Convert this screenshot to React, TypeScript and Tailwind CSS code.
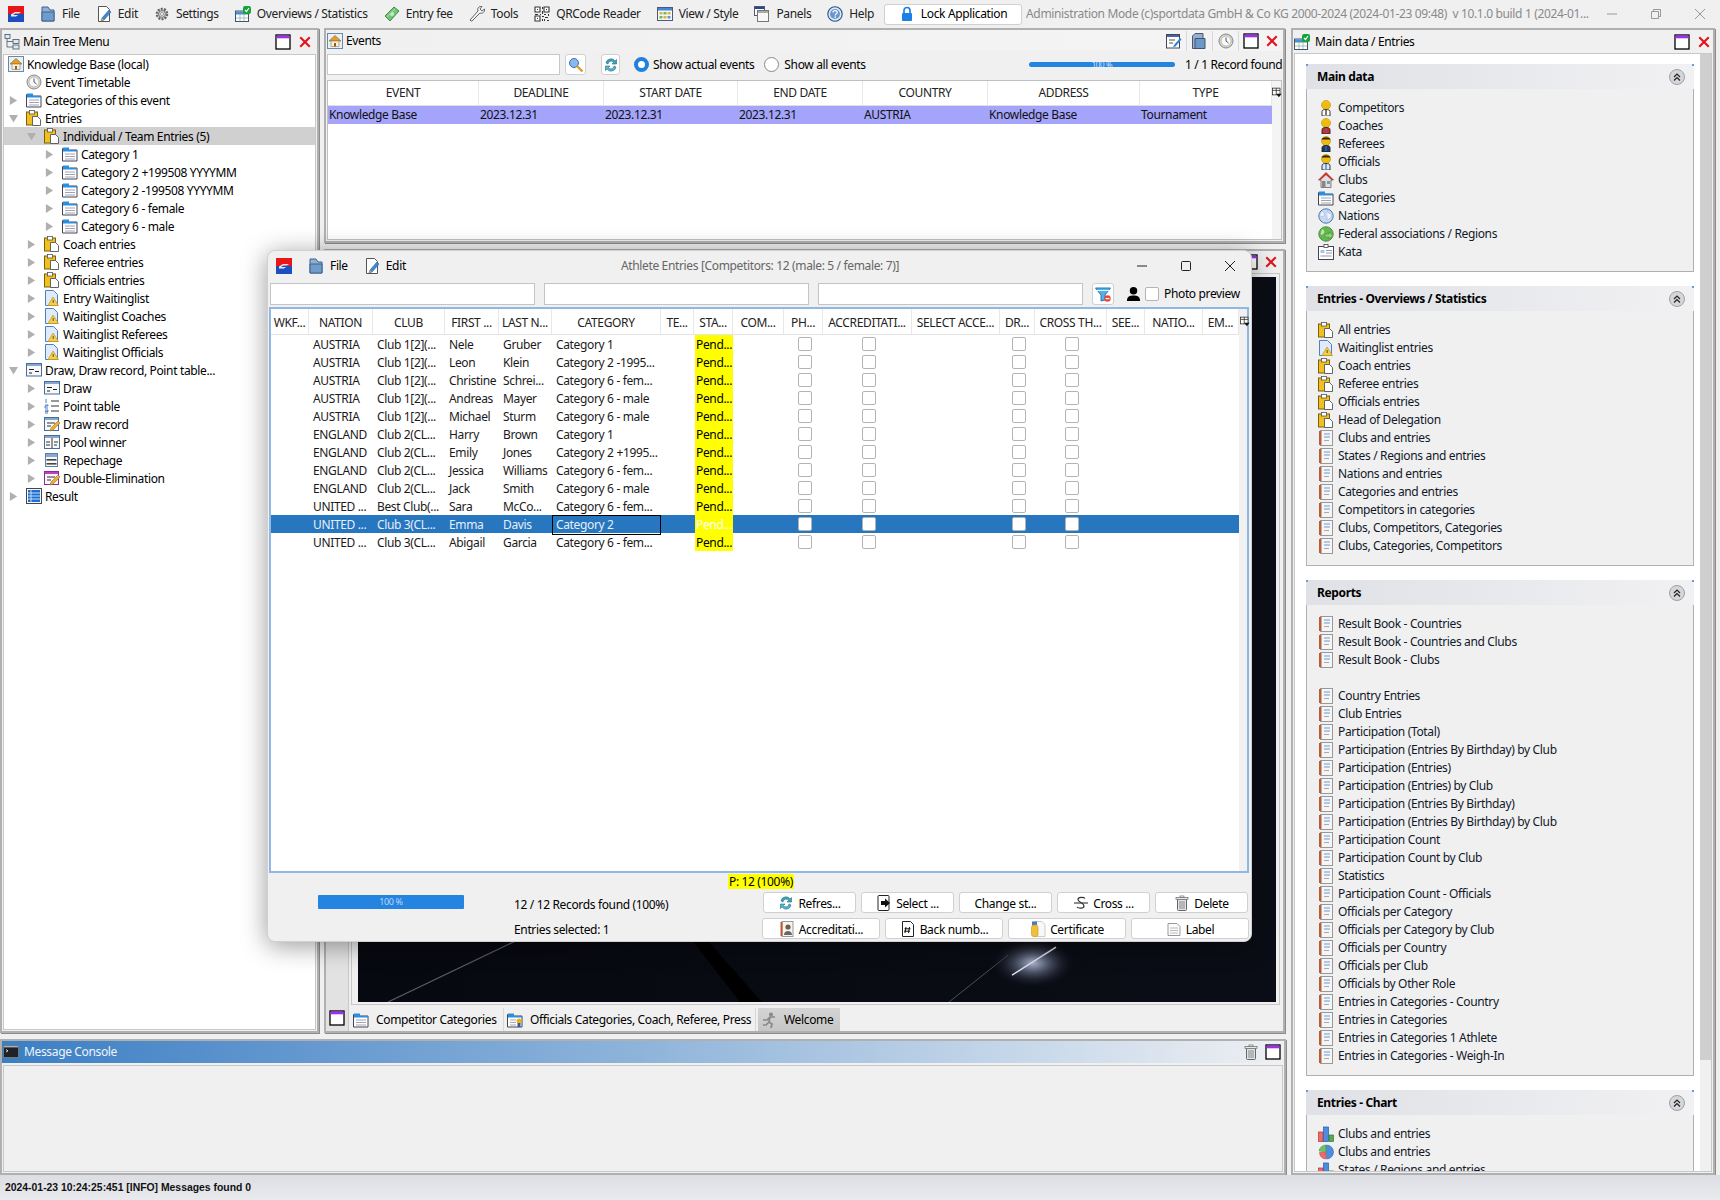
import React from "react";

type IP = { t: string; className?: string };

function Icon({ t, className = "w-4 h-4 shrink-0" }: IP) {
  const c = (n: React.ReactNode, vb = "0 0 16 16") => (
    <svg viewBox={vb} className={className} fill="none">{n}</svg>
  );
  switch (t) {
    case "logo":
      return c(<><rect x="0" y="0" width="16" height="8" fill="#e8151b" /><rect x="0" y="8" width="16" height="8" fill="#1b4fc0" /><path d="M3 8.5 L7 6 H13 L11 7.5 H7 L5 9 H10 L8 10.5 H3Z" fill="#e9e9f4" /></>);
    case "folder":
      return c(<><path d="M2 1h6l2 3h4v11H2Z" fill="#8fb0d6" stroke="#3f638c" /><path d="M2 6h12v9H2Z" fill="#6f9ccb" stroke="#3f638c" /></>);
    case "edit":
      return c(<><path d="M2.5 .5h8l3 3v12h-11Z" fill="#fff" stroke="#555" /><path d="M6 12l7-8 2 2-7 8-3 1Z" fill="#3a8ad8" stroke="#1f5c9c" strokeWidth=".6" /><path d="M5 15l1-3 2 2Z" fill="#e9a13a" /></>);
    case "gear":
      return c(<><circle cx="8" cy="8" r="5" fill="#e3e3e3" stroke="#666" strokeWidth="2.6" strokeDasharray="2 1.1" /><circle cx="8" cy="8" r="3.4" fill="#dcdcdc" stroke="#777" /><circle cx="8" cy="8" r="1.5" fill="#fff" stroke="#777" strokeWidth=".7" /></>);
    case "over":
      return c(<><rect x=".5" y="5" width="13" height="10.5" fill="#fff" stroke="#456" /><path d="M1 8.5h12M1 12h12M5 5v10M9 5v10" stroke="#8aa" strokeWidth=".7" /><rect x="1" y="5.4" width="12" height="2.6" fill="#4a90d8" /><rect x="8" y="0" width="8" height="8" rx="2" fill="#17a33b" /><path d="M10 4l1.5 1.6L14 2" stroke="#fff" strokeWidth="1.2" /></>);
    case "money":
      return c(<><path d="M1 10 L10 1 L15 5 L6 15Z" fill="#74c47a" stroke="#3d8d48" /><circle cx="8" cy="8" r="2" fill="#c5ecc4" /><path d="M3 11l8-8" stroke="#a5dba4" /></>);
    case "wrench":
      return c(<path d="M2 15 L1 14 L9 5 C8 2 10 0 13 .5 L11 3 L13 5 L15.5 3 C16 6 13.5 8 11 7 L3 15Z" fill="#f4f4f4" stroke="#666" />);
    case "qr":
      return c(<><path d="M1 1h5v5H1ZM10 1h5v5h-5ZM1 10h5v5H1Z" stroke="#333" strokeWidth="1.1" fill="#fff" /><path d="M3 3h1v1H3ZM12 3h1v1h-1ZM3 12h1v1H3ZM8 1h1v2H8ZM8 5h1v3H8ZM1 8h3v1H1ZM6 8h1v1H6ZM10 8h2v1h-2ZM14 8h1v2h-1ZM8 10h2v1H8ZM11 11h3v1h-3ZM8 13h1v2H8ZM10 13h1v2h-1ZM13 14h2v1h-2Z" fill="#333" /></>);
    case "view":
      return c(<><rect x=".5" y="1.5" width="15" height="13" fill="#f7f7f7" stroke="#557" /><rect x="1" y="2" width="14" height="2.5" fill="#3f8ad6" /><rect x="2.5" y="6" width="3" height="2.5" fill="#e6b23a" /><rect x="6.5" y="6" width="3" height="2.5" fill="#6cba5c" /><rect x="10.5" y="6" width="3" height="2.5" fill="#e6b23a" /><rect x="2.5" y="10" width="3" height="2.5" fill="#6cba5c" /><rect x="6.5" y="10" width="3" height="2.5" fill="#e6b23a" /><rect x="10.5" y="10" width="3" height="2.5" fill="#5a9be0" /></>);
    case "panels":
      return c(<><rect x=".5" y=".5" width="10" height="9" fill="#fff" stroke="#557" /><rect x="1" y="1" width="9" height="2" fill="#234a88" /><rect x="3.5" y="4.5" width="11" height="11" fill="#f8f8f8" stroke="#777" /><rect x="4" y="5" width="10" height="2" fill="#aaa" /></>);
    case "help":
      return c(<><circle cx="8" cy="8" r="7.2" fill="#dde9f7" stroke="#2d4f80" strokeWidth="1.1" /><circle cx="8" cy="8" r="5" fill="#6b97cf" /><path d="M6 6.4c0-2.5 4.2-2.5 4.2 0 0 1.6-2 1.5-2 3" stroke="#fff" strokeWidth="1.2" /><rect x="7.5" y="10.4" width="1.4" height="1.4" fill="#fff" /></>);
    case "lock":
      return c(<><path d="M5 7V4.5a3 3 0 0 1 6 0V7" stroke="#1b7fe6" strokeWidth="1.7" /><rect x="3" y="7" width="10" height="8" rx="1" fill="#1b7fe6" /></>);
    case "house":
      return c(<><rect x=".5" y=".5" width="15" height="15" fill="#e8f0f8" stroke="#6a88a8" /><path d="M8 2.5 L14 8 H2Z" fill="#e0a030" stroke="#a05a10" strokeWidth=".6" /><rect x="4" y="8" width="8" height="5.5" fill="#f6f0e0" stroke="#8a7a50" strokeWidth=".6" /><rect x="7" y="10" width="2" height="3.5" fill="#a05a10" /></>);
    case "treeic":
      return c(<><rect x="1" y="0.5" width="5" height="4" fill="#dfe8f3" stroke="#456" strokeWidth=".8" /><rect x="9" y="5.5" width="6" height="4" fill="#dfe8f3" stroke="#456" strokeWidth=".8" /><rect x="9" y="11" width="6" height="4" fill="#dfe8f3" stroke="#456" strokeWidth=".8" /><path d="M3 5v8h6M3 7.5h6" stroke="#456" strokeWidth=".8" /></>);
    case "clock":
      return c(<><circle cx="8" cy="8" r="7" fill="#e8d9ad" stroke="#7a8aa8" /><circle cx="8" cy="8" r="5" fill="#f7f9fc" stroke="#99a" strokeWidth=".6" /><path d="M8 4.5V8l2.5 2" stroke="#4a5a78" strokeWidth="1" /></>);
    case "cat":
      return c(<><path d="M.5 2.5h5l1 1.5h8.5v11H.5Z" fill="#fff" stroke="#445" /><rect x="1" y="1.5" width="6" height="2.6" fill="#2b8fe0" /><rect x="1" y="4" width="14" height="1.5" fill="#2b8fe0" /><path d="M3 8h10M3 10.5h10M3 13h10" stroke="#99a" strokeWidth=".9" /></>);
    case "catof":
      return c(<><path d="M.5 2.5h5l1 1.5h8.5v11H.5Z" fill="#fff" stroke="#445" /><rect x="1" y="1.5" width="6" height="2.6" fill="#2b8fe0" /><rect x="1" y="4" width="14" height="1.5" fill="#2b8fe0" /><path d="M3 8h6M3 10.5h6M3 13h6" stroke="#99a" strokeWidth=".9" /><circle cx="12" cy="9" r="2.5" fill="#e8b410" /><rect x="10.5" y="11" width="3" height="4" fill="#2b5ca8" /></>);
    case "clip":
      return c(<><rect x=".5" y="2" width="11" height="13" fill="#efc01e" stroke="#7a6010" /><rect x="3.5" y=".5" width="5" height="3.5" fill="#fff" stroke="#555" strokeWidth=".8" /><path d="M6.5 6.5h5l3 3v6h-8Z" fill="#fff" stroke="#555" strokeWidth=".9" /></>);
    case "warn":
      return c(<><path d="M1.5.5h8l4 4v11h-12Z" fill="#dfeafa" stroke="#4d80c0" /><path d="M9 7l5.5 8.5H4Z" fill="#f4cf4a" stroke="#c49418" strokeWidth=".7" /><path d="M9.2 10v3" stroke="#6a5010" strokeWidth="1" /></>);
    case "draw":
      return c(<><rect x=".5" y="1.5" width="15" height="12.5" fill="#f8f8f8" stroke="#456c9a" /><rect x="1" y="2" width="14" height="2" fill="#86a8d0" /><path d="M3 7.5h5M3 11h3M9 9.5h4" stroke="#222" strokeWidth="1.1" /></>);
    case "point":
      return c(<><path d="M7 3h8M7 8h8M7 13h8" stroke="#333" strokeWidth="1.1" /><path d="M2 1v4M1 7h3v1H1v2h3M1 12h3v1.5H1M1 15h3" stroke="#4d7fc4" strokeWidth="1" /></>);
    case "drawrec":
      return c(<><rect x=".5" y="1.5" width="14" height="13" fill="#f8f8f8" stroke="#456c9a" /><rect x="1" y="2" width="13" height="2" fill="#86a8d0" /><path d="M3 7h8M3 10h4" stroke="#333" /><path d="M6 15l1-3 7-7 2 2-7 7Z" fill="#eab03a" stroke="#96701a" strokeWidth=".6" /></>);
    case "pool":
      return c(<><rect x=".5" y="1.5" width="15" height="13" fill="#f8f8f8" stroke="#456c9a" /><rect x="1" y="2" width="14" height="2" fill="#86a8d0" /><path d="M8 4v10M2 8h4M2 11h4M10 8h4M10 11h3" stroke="#333" /></>);
    case "rep":
      return c(<><rect x="1.5" y="1.5" width="12" height="13" fill="#f8f8f8" stroke="#5a7faa" /><rect x="2" y="2" width="11" height="3" fill="#86a8d0" /><rect x="2.5" y="7" width="10" height="1.6" fill="#444" /><rect x="2.5" y="11" width="10" height="1.6" fill="#444" /></>);
    case "dbl":
      return c(<><rect x=".5" y="1.5" width="14" height="13" fill="#f8f8f8" stroke="#8a2c90" /><rect x="1" y="2" width="13" height="2" fill="#c43cc8" /><path d="M3 7h8M3 10h4" stroke="#333" /><path d="M6 15l1-3 7-7 2 2-7 7Z" fill="#eab03a" stroke="#96701a" strokeWidth=".6" /></>);
    case "result":
      return c(<><rect x=".5" y=".5" width="15" height="15" fill="#f5f8fc" stroke="#445" /><rect x="2" y="2" width="12" height="12" fill="#1c6fd0" /><path d="M2 5h12M2 8h12M2 11h12M5 2v12" stroke="#dbe8f6" strokeWidth=".9" /></>);
    case "comp": case "coach": case "ref": case "off": {
      const dark = t === "ref" || t === "off";
      const body = t === "comp" ? "#fff" : t === "coach" ? "#d82a1c" : t === "ref" ? "#233760" : "#dfe9f5";
      return c(<><circle cx="8" cy="5" r="4.5" fill="#eebb10" stroke="#b88a00" strokeWidth=".6" /><path d="M3.5 3.5C4 .5 12 .5 12.5 3.5Z" fill={dark ? "#352510" : "#f0c010"} /><path d="M4 16v-4.5C4 10 6 9.5 8 9.5s4 .5 4 2V16Z" fill={body} stroke="#222" strokeWidth=".9" /><path d="M8 10v5" stroke={t === "comp" ? "#222" : "#1a78d8"} strokeWidth="1.2" /></>);
    }
    case "club":
      return c(<><path d="M8 .5 L15.5 8 H13v7.5H3V8H.5Z" fill="#dfdfdf" stroke="#555" strokeWidth=".7" /><path d="M8 .5 L15.5 8 L13.5 8 L8 3 L2.5 8 H.5Z" fill="#d42a1a" /><rect x="4" y="9" width="3.5" height="6.5" fill="#888" /><rect x="9" y="9" width="3" height="3" fill="#7f9ab8" /></>);
    case "globe":
      return c(<><circle cx="8" cy="8" r="7.2" fill="#c5d9f2" stroke="#4c77ad" /><path d="M4 3.5c2 1 3 2 2 4S3 9 2.5 8M10 2c-1 2 0 3 2 3.5s2 2 1 3.5-3 3-4 3c1-2-1-3 0-4.5" fill="#eef4fb" stroke="#8aaad2" strokeWidth=".5" /></>);
    case "fed":
      return c(<><circle cx="8" cy="8" r="7.2" fill="#62b84e" stroke="#4d8f3d" /><path d="M4 3c2 1 3 2 2 4S3 9 2.5 8" fill="#bfe5a7" /><path d="M7 8h4V6l4 3.5-4 3.5v-2H7Z" fill="#95d07e" stroke="#3e8430" strokeWidth=".5" /></>);
    case "kata":
      return c(<><rect x=".5" y="2.5" width="15" height="13" fill="#fff" stroke="#445" /><rect x="6" y=".5" width="4" height="3" fill="#fff" stroke="#445" strokeWidth=".8" /><rect x="2.5" y="6" width="4" height="3" fill="#a0c8ee" /><path d="M8 6.5h6M8 9h6M2.5 12h11" stroke="#88a" strokeWidth=".9" /></>);
    case "book":
      return c(<><rect x="2.5" y=".5" width="12" height="15" fill="#f5f5f5" stroke="#999" /><rect x="1" y="1" width="2.5" height="14" fill="#b3603a" /><path d="M6 4h6M6 7h6" stroke="#6f9ad8" strokeWidth="1.2" /><path d="M6 10.5h5" stroke="#aaa" /></>);
    case "bar":
      return c(<><rect x=".5" y="6" width="4.5" height="9.5" fill="#ef6a6a" stroke="#b33" strokeWidth=".7" /><rect x="5.5" y="1" width="5" height="14.5" fill="#4e8ce0" stroke="#2759a8" strokeWidth=".7" /><rect x="11" y="9" width="4.5" height="6.5" fill="#58a858" stroke="#2f7a30" strokeWidth=".7" /></>);
    case "pie":
      return c(<><path d="M8.5 1a7 7 0 0 1 0 14Z" fill="#4e8ce0" stroke="#2759a8" strokeWidth=".5" /><path d="M8 8V1A7 7 0 0 0 1 7Z" fill="#6cc06a" stroke="#3a8a3a" strokeWidth=".5" /><path d="M8 8.5H1.5A7 7 0 0 0 7.5 15Z" fill="#ee6a6a" stroke="#b33" strokeWidth=".5" /></>);
    case "search":
      return c(<><circle cx="6" cy="6" r="4.5" fill="#8ab8ee" stroke="#3b6fb4" /><path d="M9 9l5.5 5.5" stroke="#dc9c28" strokeWidth="2.4" /></>);
    case "refresh":
      return c(<><path d="M3 6a5 5 0 0 1 9-2l1.5-1.5V7H9l1.5-1.5A3 3 0 0 0 5 7Z" fill="#3fa4b8" stroke="#1e6c88" strokeWidth=".6" /><path d="M13 10a5 5 0 0 1-9 2l-1.5 1.5V9H7l-1.5 1.5A3 3 0 0 0 11 9Z" fill="#58b8c8" stroke="#1e6c88" strokeWidth=".6" /></>);
    case "funnel":
      return c(<><path d="M.5 2h15l-5.5 7v5l-4 1V9Z" fill="#58aee8" stroke="#2a78b0" /><path d="M2 4.5h12" stroke="#dff" /><circle cx="12.5" cy="12.5" r="3.2" fill="#e8483c" /><rect x="10.6" y="12" width="3.8" height="1.2" fill="#fff" /></>);
    case "user":
      return c(<><circle cx="8" cy="4.5" r="4" fill="#000" /><path d="M1 15.5c0-5 3-6 7-6s7 1 7 6Z" fill="#000" /></>);
    case "trash":
      return c(<><rect x="3.5" y="4" width="9" height="11.5" rx="1" fill="#dfe4e8" stroke="#666" /><path d="M6 6v8M8 6v8M10 6v8" stroke="#888" /><rect x="2" y="2.5" width="12" height="1.8" fill="#eee" stroke="#666" strokeWidth=".7" /><rect x="6" y="1" width="4" height="1.6" fill="#fff" stroke="#666" strokeWidth=".7" /></>);
    case "enter":
      return c(<><rect x="2" y=".5" width="11" height="15" rx="1" fill="#fff" stroke="#222" /><path d="M5 6h4V3.5L14 8l-5 4.5V10H5Z" fill="#111" /></>);
    case "strike":
      return c(<><path d="M12 3.5C11 2 5 1.5 5 4.5c0 3 6 3 6 6.5 0 3-6 2.5-7 1" stroke="#333" strokeWidth="1.2" /><path d="M1 8h14" stroke="#333" strokeWidth="1.1" /></>);
    case "accred":
      return c(<><rect x="3" y=".5" width="11" height="15" fill="#f4f4f4" stroke="#999" /><rect x="1.5" y="1" width="2" height="14" fill="#c2582c" /><circle cx="9" cy="6" r="2.6" fill="#7a5a3a" /><path d="M5 14c0-3 2-4 4-4s4 1 4 4Z" fill="#666" /></>);
    case "hash":
      return c(<><path d="M2.5.5h8l3 3v12h-11Z" fill="#fff" stroke="#222" /><path d="M6 6l-1 6M9.5 6l-1 6M4.5 7.8h6M4 10.2h6" stroke="#111" /></>);
    case "medal":
      return c(<><path d="M4 .5h8l3 3v12H4Z" fill="#f8f8f8" stroke="#ccc" /><rect x="2" y=".5" width="5" height="4" fill="#4a78c8" /><path d="M2.5 4h4.5l1 2.5v7a2 2 0 0 1-2 2H3.5a2 2 0 0 1-2-2v-7Z" fill="#efc03a" stroke="#c49418" strokeWidth=".6" /></>);
    case "label":
      return c(<><path d="M2 2.5h9l3 3v9H2Z" fill="#fbfbfb" stroke="#999" /><path d="M4 7h8M4 9.5h8M4 12h8" stroke="#bbb" /></>);
    case "runner":
      return c(<><circle cx="10" cy="2.5" r="2" fill="#888" /><path d="M14 5L9 5 6 8l-4 0M9 5l-1 5 3 2-1 4M8 10l-3 3-3 0" stroke="#888" strokeWidth="1.7" /></>);
    case "term":
      return c(<><rect x=".5" y="1.5" width="15" height="12" fill="#1f2226" stroke="#777" /><rect x="1" y="2" width="14" height="1.4" fill="#9fb3cc" /><path d="M3 5.5l2 1.3-2 1.3" stroke="#fff" strokeWidth=".8" /></>);
    case "win":
      return c(<><rect x="1" y="1" width="14" height="14" fill="#fff" stroke="#000" strokeWidth="1.3" /><rect x="1.5" y="1.5" width="13" height="2.8" fill="#9a30e8" /></>);
    case "x":
      return c(<path d="M4 2.5l4 4 4-4 1.5 1.5-4 4 4 4-1.5 1.5-4-4-4 4L2.5 12l4-4-4-4Z" fill="#e0141c" />);
    case "cols":
      return c(<><rect x="2" y="1.5" width="10" height="9" fill="#fff" stroke="#222" /><path d="M2 4.5h10M7 1.5v9" stroke="#222" /><path d="M7 9h7l-3.5 4.5Z" fill="#111" /></>);
    case "notes":
      return c(<><rect x=".5" y="1.5" width="13" height="13.5" fill="#fff" stroke="#445" /><rect x="1" y="2" width="12" height="2" fill="#46a" /><path d="M3 7h6M3 10h4" stroke="#555" /><path d="M7 14l1-2 6-7 1.5 1.5-6 7Z" fill="#2f86d8" /></>);
    case "docs":
      return c(<><path d="M4 .5h8v15H1.5V3Z" fill="#8eb2d8" stroke="#556" /><path d="M4 5.5h10v10H4Z" fill="#6b98c8" stroke="#456" /></>);
    default:
      return c(null);
  }
}

function Arrow({ open }: { open?: boolean }) {
  return open ? (
    <svg viewBox="0 0 10 10" className="w-[9px] h-[9px]"><path d="M0 1h10L5 9.5Z" fill="#b0b0b0" /></svg>
  ) : (
    <svg viewBox="0 0 10 10" className="w-[9px] h-[9px]"><path d="M1 0v10l8-5Z" fill="#b0b0b0" /></svg>
  );
}

const tree: [number, string, string, number, boolean?][] = [
  [0, "house", "Knowledge Base (local)", 0],
  [1, "clock", "Event Timetable", 0],
  [1, "cat", "Categories of this event", 1],
  [1, "clip", "Entries", 2],
  [2, "clip", "Individual / Team Entries (5)", 2, true],
  [3, "cat", "Category 1", 1],
  [3, "cat", "Category 2 +199508 YYYYMM", 1],
  [3, "cat", "Category 2 -199508 YYYYMM", 1],
  [3, "cat", "Category 6 - female", 1],
  [3, "cat", "Category 6 - male", 1],
  [2, "clip", "Coach entries", 1],
  [2, "clip", "Referee entries", 1],
  [2, "clip", "Officials entries", 1],
  [2, "warn", "Entry Waitinglist", 1],
  [2, "warn", "Waitinglist Coaches", 1],
  [2, "warn", "Waitinglist Referees", 1],
  [2, "warn", "Waitinglist Officials", 1],
  [1, "draw", "Draw, Draw record, Point table...", 2],
  [2, "draw", "Draw", 1],
  [2, "point", "Point table", 1],
  [2, "drawrec", "Draw record", 1],
  [2, "pool", "Pool winner", 1],
  [2, "rep", "Repechage", 1],
  [2, "dbl", "Double-Elimination", 1],
  [1, "result", "Result", 1],
];

const treeIndent = ["pl-[4px]", "pl-[4px]", "pl-[22px]", "pl-[40px]"];

function TreeRow({ r }: { r: (typeof tree)[number] }) {
  const [lvl, ic, label, arrow, sel] = r;
  return (
    <div className={`h-[18px] flex items-center ${treeIndent[lvl]} ${sel ? "bg-[#d0d0d0]" : ""}`}>
      {lvl > 0 && (
        <span className="w-[18px] h-[18px] flex items-center justify-start pl-[1px] shrink-0">
          {arrow === 1 && <Arrow />}
          {arrow === 2 && <Arrow open />}
        </span>
      )}
      <Icon t={ic} />
      <span className="ml-[3px] mt-[2px] whitespace-nowrap">{label}</span>
    </div>
  );
}

const toolbar: [string, string][] = [
  ["folder", "File"], ["edit", "Edit"], ["gear", "Settings"], ["over", "Overviews / Statistics"], ["money", "Entry fee"],
  ["wrench", "Tools"], ["qr", "QRCode Reader"], ["view", "View / Style"], ["panels", "Panels"], ["help", "Help"],
];

const evCols = ["EVENT", "DEADLINE", "START DATE", "END DATE", "COUNTRY", "ADDRESS", "TYPE"];
const evRow = ["Knowledge Base", "2023.12.31", "2023.12.31", "2023.12.31", "AUSTRIA", "Knowledge Base", "Tournament"];

const gridCols = "grid grid-cols-[38px_64px_72px_54px_53px_109px_33px_39px_51px_39px_89px_88px_35px_72px_38px_58px_36px]";
const heads = ["WKF...", "NATION", "CLUB", "FIRST ...", "LAST N...", "CATEGORY", "TE...", "STA...", "COM...", "PH...", "ACCREDITATI...", "SELECT ACCE...", "DR...", "CROSS TH...", "SEE...", "NATIO...", "EM..."];
const people = [
  ["AUSTRIA", "Club 1[2](...", "Nele", "Gruber", "Category 1"],
  ["AUSTRIA", "Club 1[2](...", "Leon", "Klein", "Category 2 -1995..."],
  ["AUSTRIA", "Club 1[2](...", "Christine", "Schrei...", "Category 6 - fem..."],
  ["AUSTRIA", "Club 1[2](...", "Andreas", "Mayer", "Category 6 - male"],
  ["AUSTRIA", "Club 1[2](...", "Michael", "Sturm", "Category 6 - male"],
  ["ENGLAND", "Club 2(CL...", "Harry", "Brown", "Category 1"],
  ["ENGLAND", "Club 2(CL...", "Emily", "Jones", "Category 2 +1995..."],
  ["ENGLAND", "Club 2(CL...", "Jessica", "Williams", "Category 6 - fem..."],
  ["ENGLAND", "Club 2(CL...", "Jack", "Smith", "Category 6 - male"],
  ["UNITED ...", "Best Club(...", "Sara", "McCo...", "Category 6 - fem..."],
  ["UNITED ...", "Club 3(CL...", "Emma", "Davis", "Category 2"],
  ["UNITED ...", "Club 3(CL...", "Abigail", "Garcia", "Category 6 - fem..."],
];

function Check({ sel }: { sel: boolean }) {
  return (
    <div className="flex justify-center pl-[2px] pt-[2px]">
      <div className={`w-[14px] h-[14px] rounded-[2px] border border-[#b4b4b4] ${sel ? "bg-white" : ""}`} />
    </div>
  );
}

function PersonRow({ p, sel }: { p: string[]; sel: boolean }) {
  return (
    <div className={`${gridCols} h-[18px] leading-[20px] ${sel ? "bg-[#2676c0] text-[#e8eef6]" : "text-[#1a1a1a]"}`}>
      <div />
      {p.map((v, i) =>
        i === 4 && sel ? (
          <div key={i} className="border border-black pl-[3px] leading-[18px] whitespace-nowrap">{v}</div>
        ) : (
          <div key={i} className="pl-[4px] h-[18px] whitespace-nowrap overflow-hidden">{v}</div>
        )
      )}
      <div />
      <div className={`ml-[1px] h-[18px] bg-[#ffff00] pl-[1px] overflow-hidden ${sel ? "text-white" : "text-black"}`}>Pend...</div>
      <div />
      <Check sel={sel} />
      <Check sel={sel} />
      <div />
      <Check sel={sel} />
      <Check sel={sel} />
    </div>
  );
}

function Btn({ ic, label, w }: { ic?: string; label: string; w: string }) {
  return (
    <div className={`${w} h-[21px] flex items-center justify-center gap-[4px] bg-white border border-[#d0d0d0] rounded-[3px] whitespace-nowrap`}>
      {ic && <Icon t={ic} />}
      <span className="mt-[2px]">{label}</span>
    </div>
  );
}

function Section({ title, children }: { title: string; children: React.ReactNode }) {
  return (
    <div className="mb-[14px] ml-[11px] mr-[6px] relative">
      <div className="h-[25px] flex items-center justify-between pl-[11px] pr-[9px] font-bold text-black bg-gradient-to-r from-[#dfe1e6] to-[#f1f1f3]">
        <span>{title}</span>
        <span className="w-[16px] h-[16px] rounded-full border border-[#a0a0a0] bg-[#d4d6da] flex items-center justify-center">
          <svg viewBox="0 0 10 10" className="w-[10px] h-[10px]"><path d="M2 5l3-3 3 3M2 8.5l3-3 3 3" stroke="#222" strokeWidth="1.2" fill="none" /></svg>
        </span>
      </div>
      <span className="absolute left-0 top-0 w-[2px] h-[2px] bg-[#6a9ae0]" />
      <span className="absolute right-0 top-0 w-[2px] h-[2px] bg-[#6a9ae0]" />
      <div className="bg-[#f0f0f0] border-x border-b border-[#b0b0b0] pl-[11px] py-[10px]">{children}</div>
    </div>
  );
}

function Item({ ic, label }: { ic: string; label: string }) {
  return (
    <div className="h-[18px] flex items-center">
      <Icon t={ic} />
      <span className="ml-[4px] whitespace-nowrap text-[#10182a]">{label}</span>
    </div>
  );
}

const mainData: [string, string][] = [
  ["comp", "Competitors"], ["coach", "Coaches"], ["ref", "Referees"], ["off", "Officials"], ["club", "Clubs"],
  ["cat", "Categories"], ["globe", "Nations"], ["fed", "Federal associations / Regions"], ["kata", "Kata"],
];
const overview: [string, string][] = [
  ["clip", "All entries"], ["warn", "Waitinglist entries"], ["clip", "Coach entries"], ["clip", "Referee entries"], ["clip", "Officials entries"],
  ["clip", "Head of Delegation"], ["book", "Clubs and entries"], ["book", "States / Regions and entries"], ["book", "Nations and entries"],
  ["book", "Categories and entries"], ["book", "Competitors in categories"], ["book", "Clubs, Competitors, Categories"], ["book", "Clubs, Categories, Competitors"],
];
const reports = [
  "Result Book - Countries", "Result Book - Countries and Clubs", "Result Book - Clubs", "",
  "Country Entries", "Club Entries", "Participation (Total)", "Participation (Entries By Birthday) by Club", "Participation (Entries)",
  "Participation (Entries) by Club", "Participation (Entries By Birthday)", "Participation (Entries By Birthday) by Club", "Participation Count",
  "Participation Count by Club", "Statistics", "Participation Count - Officials", "Officials per Category", "Officials per Category by Club",
  "Officials per Country", "Officials per Club", "Officials by Other Role", "Entries in Categories - Country", "Entries in Categories",
  "Entries in Categories 1 Athlete", "Entries in Categories - Weigh-In",
];

const panel = "border-2 border-[#b0b0b0] bg-[#f0f0f0] shadow-[1px_1px_0_#8c8c8c]";

export default function App() {
  return (
    <div className="relative w-[1720px] h-[1200px] overflow-hidden bg-[#f0f0f0] flex flex-col text-[12px] text-black font-['Noto_Sans',sans-serif] tracking-[-0.35px]">
      {/* Top toolbar */}
      <div className="h-[28px] flex items-center pl-[8px] shrink-0">
        <Icon t="logo" />
        <div className="flex items-center ml-[16px]">
          {toolbar.map(([ic, l]) => (
            <div key={l} className="flex items-center mr-[16px]">
              <Icon t={ic} />
              <span className="ml-[6px] whitespace-nowrap text-[#222]">{l}</span>
            </div>
          ))}
        </div>
        <div className="ml-[-6px] w-[138px] h-[21px] flex items-center justify-center gap-[6px] bg-white border border-[#d0d0d0] rounded-[3px]">
          <Icon t="lock" />
          <span>Lock Application</span>
        </div>
        <span className="ml-[4px] w-[563px] text-[#8a8a8a] whitespace-nowrap overflow-hidden">Administration Mode (c)sportdata GmbH &amp; Co KG 2000-2024 (2024-01-23 09:48)&nbsp; v 10.1.0 build 1 (2024-01...</span>
        <div className="flex items-center ml-[18px] gap-[34px] text-[#999]">
          <svg viewBox="0 0 10 10" className="w-[10px] h-[10px]"><path d="M0 5h10" stroke="#999" /></svg>
          <svg viewBox="0 0 10 10" className="w-[10px] h-[10px]"><path d="M.5 2.5h7v7h-7ZM2.5 2.5V.5h7v7h-2" stroke="#999" fill="none" /></svg>
          <svg viewBox="0 0 10 10" className="w-[10px] h-[10px]"><path d="M0 0l10 10M10 0L0 10" stroke="#999" /></svg>
        </div>
      </div>

      <div className="flex h-[1147px] shrink-0">
        <div className="w-[1286px] flex flex-col shrink-0">
          <div className="flex h-[1005px] shrink-0">
            {/* Tree panel */}
            <div className={`${panel} w-[319px] flex flex-col shrink-0`}>
              <div className="h-[24px] flex items-center pl-[2px] pr-[4px]">
                <Icon t="treeic" />
                <span className="ml-[3px] flex-1">Main Tree Menu</span>
                <Icon t="win" />
                <Icon t="x" className="w-4 h-4 ml-[6px] shrink-0" />
              </div>
              <div className="flex-1 mx-[1px] mb-[1px] bg-white border border-[#c8c8c8]">
                {tree.map((r) => <TreeRow key={r[2]} r={r} />)}
              </div>
            </div>

            <div className="w-[961px] ml-[5px] flex flex-col shrink-0">
              {/* Events */}
              <div className={`${panel} h-[215px] flex flex-col shrink-0`}>
                <div className="h-[21px] flex items-center pl-[1px] pr-[3px] bg-gradient-to-r from-[#f0f0f0] to-[#f4f4f4]">
                  <Icon t="house" />
                  <span className="ml-[3px] flex-1">Events</span>
                  <Icon t="notes" />
                  <span className="w-[1px] h-[20px] bg-[#d8d8d8] mx-[4px]" />
                  <Icon t="docs" />
                  <span className="w-[1px] h-[20px] bg-[#d8d8d8] mx-[5px]" />
                  <Icon t="clock" />
                  <span className="w-[1px] h-[20px] bg-[#d8d8d8] mx-[4px]" />
                  <Icon t="win" />
                  <Icon t="x" className="w-4 h-4 ml-[5px] shrink-0" />
                </div>
                <div className="h-[27px] mb-[2px] flex items-center pl-[1px]">
                  <div className="w-[233px] h-[21px] bg-white border border-[#c8c8c8]" />
                  <div className="ml-[5px] w-[21px] h-[21px] bg-white border border-[#d0d0d0] rounded-[3px] flex items-center justify-center"><Icon t="search" /></div>
                  <div className="ml-[15px] w-[19px] h-[21px] bg-white border border-[#d0d0d0] rounded-[3px] flex items-center justify-center"><Icon t="refresh" /></div>
                  <span className="ml-[14px] w-[15px] h-[15px] rounded-full border-[4px] border-[#1f80e0] bg-white" />
                  <span className="ml-[4px] mt-[1px]">Show actual events</span>
                  <span className="ml-[10px] w-[15px] h-[15px] rounded-full border border-[#888] bg-white" />
                  <span className="ml-[5px] mt-[1px]">Show all events</span>
                  <div className="ml-[auto] w-[146px] h-[5px] rounded-full bg-[#2484e0] overflow-hidden text-[8px] leading-[5px] text-center text-[#cfe2f6]">100 %</div>
                  <span className="ml-[10px] mt-[1px] w-[98px] whitespace-nowrap">1 / 1 Record found</span>
                </div>
                <div className="flex-1 mx-[1px] mb-[1px] border border-[#c0c0c0] bg-white flex">
                  <div className="flex-1 flex flex-col">
                    <div className="grid grid-cols-[151px_125px_134px_125px_125px_152px_132px] h-[25px] border-b border-[#e0e0e0]">
                      {evCols.map((h) => (
                        <div key={h} className="flex items-center justify-center border-r border-[#e8e8e8] text-[#222]">{h}</div>
                      ))}
                    </div>
                    <div className="grid grid-cols-[151px_125px_134px_125px_125px_152px_132px] h-[18px] leading-[18px] bg-[#a4a4fa] text-[#111]">
                      {evRow.map((v, i) => (
                        <div key={i} className="pl-[1px] whitespace-nowrap">{v}</div>
                      ))}
                    </div>
                  </div>
                  <div className="w-[10px] relative bg-[#f4f4f4]">
                    <Icon t="cols" className="w-[12px] h-[12px] absolute -left-[1px] top-[6px]" />
                  </div>
                </div>
              </div>

              {/* Lower tab panel */}
              <div className={`${panel} flex-1 min-h-0 mt-[6px] flex flex-col`}>
                <div className="h-[22px] flex items-center justify-end pr-[4px]">
                  <Icon t="win" />
                  <Icon t="x" className="w-4 h-4 ml-[5px] shrink-0" />
                </div>
                <div className="flex-1 flex min-h-0">
                  <div className="w-[23px] bg-gradient-to-b from-[#f0f0f0] to-[#e2e2e2] border-r border-[#c8c8c8]" />
                  <div className="flex-1 ml-[2px] mr-[3px] border border-[#c8c8c8] pl-[6px] pr-[3px] pt-[3px] pb-[2px] min-h-0">
                    <div className="w-full h-full bg-[#05060b]">
                      <svg viewBox="0 0 918 727" className="w-full h-full" preserveAspectRatio="none">
                        <defs>
                          <radialGradient id="flare">
                            <stop offset="0" stopColor="#aab4cc" />
                            <stop offset="0.3" stopColor="#5a6278" />
                            <stop offset="1" stopColor="#05060b" stopOpacity="0" />
                          </radialGradient>
                          <linearGradient id="base" x1="0" y1="0" x2="1" y2="0">
                            <stop offset="0" stopColor="#070910" />
                            <stop offset="1" stopColor="#0b0d16" />
                          </linearGradient>
                        </defs>
                        <rect x="0" y="0" width="918" height="727" fill="url(#base)" />
                        <path d="M335 666 L382 727 H404 L350 666Z" fill="#000" />
                        <path d="M157 666 L30 727" stroke="#5a5e66" strokeWidth="1.2" />
                        <path d="M591 727 L650 680" stroke="#4a5060" strokeWidth="1" />
                        <ellipse cx="675" cy="688" rx="44" ry="26" fill="url(#flare)" />
                        <path d="M654 700 L698 672" stroke="#d8deea" strokeWidth="1.5" />
                      </svg>
                    </div>
                  </div>
                </div>
                <div className="h-[23px] mt-[3px] flex items-stretch shrink-0">
                  <div className="w-[23px] -mt-[3px] bg-[#e2e2e2] border-r border-[#c8c8c8] flex items-center justify-center"><Icon t="win" /></div>
                  <div className="flex items-center pl-[4px] w-[155px] border-r border-[#d8d8d8]">
                    <Icon t="cat" />
                    <span className="ml-[7px] whitespace-nowrap">Competitor Categories</span>
                  </div>
                  <div className="flex items-center pl-[3px] w-[252px] border-r border-[#d8d8d8]">
                    <Icon t="catof" />
                    <span className="ml-[7px] whitespace-nowrap">Officials Categories, Coach, Referee, Press</span>
                  </div>
                  <div className="flex items-center ml-[2px] pl-[3px] w-[82px] bg-gradient-to-b from-[#d4d4d4] to-[#c6c6c6]">
                    <Icon t="runner" />
                    <span className="ml-[7px]">Welcome</span>
                  </div>
                </div>
              </div>
            </div>
          </div>

          {/* Console */}
          <div className={`${panel} flex-1 min-h-0 mt-[6px] flex flex-col`}>
            <div className="h-[22px] flex items-center pl-[1px] pr-[3px] bg-gradient-to-r from-[#3a7fc4] via-[#8fb4da] to-[#eef0f3]">
              <Icon t="term" />
              <span className="ml-[5px] flex-1 text-[#eef4fb]">Message Console</span>
              <Icon t="trash" />
              <Icon t="win" className="w-4 h-4 ml-[6px] shrink-0" />
            </div>
            <div className="flex-1 m-[1px] mt-[2px] border border-[#c8c8c8]" />
          </div>
        </div>

        {/* Right panel */}
        <div className={`${panel} w-[424px] ml-[5px] flex flex-col shrink-0`}>
          <div className="h-[23px] flex items-center pl-[1px] pr-[1px]">
            <Icon t="over" />
            <span className="ml-[5px] flex-1">Main data / Entries</span>
            <Icon t="win" />
            <Icon t="x" className="w-4 h-4 ml-[6px] shrink-0" />
          </div>
          <div className="flex-1 min-h-0 mx-[1px] mb-[1px] flex border border-[#c8c8c8] bg-white">
            <div className="flex-1 min-w-0 overflow-hidden pt-[10px]">
              <Section title="Main data">
                {mainData.map(([i, l]) => <Item key={l} ic={i} label={l} />)}
              </Section>
              <Section title="Entries - Overviews / Statistics">
                {overview.map(([i, l]) => <Item key={l} ic={i} label={l} />)}
              </Section>
              <Section title="Reports">
                {reports.map((l, n) =>
                  l ? <Item key={n} ic="book" label={l} /> : <div key={n} className="h-[18px]" />
                )}
              </Section>
              <Section title="Entries - Chart">
                <Item ic="bar" label="Clubs and entries" />
                <Item ic="pie" label="Clubs and entries" />
                <Item ic="bar" label="States / Regions and entries" />
              </Section>
            </div>
            <div className="w-[11px] bg-[#f0f0f0] shrink-0">
              <div className="h-[1006px] bg-[#cfcfcf]" />
            </div>
          </div>
        </div>
      </div>

      {/* Status bar */}
      <div className="flex-1 flex items-center pl-[5px] bg-gradient-to-b from-[#dcdee3] to-[#e9eaee] font-bold tracking-normal text-[#111] font-['Liberation_Sans',sans-serif]">
        <span className="text-[10.4px]">2024-01-23 10:24:25:451 [INFO] Messages found 0</span>
      </div>

      {/* Floating window */}
      <div className="absolute left-[267px] top-[250px] w-[985px] h-[692px] bg-[#f0f0f0] rounded-[8px] border border-[#d0d0d0] shadow-[0_4px_26px_rgba(0,0,0,0.4)] flex flex-col">
        <div className="h-[29px] mb-[3px] flex items-center pl-[8px] shrink-0 relative">
          <Icon t="logo" />
          <Icon t="folder" className="w-4 h-4 ml-[16px] shrink-0" />
          <span className="ml-[6px]">File</span>
          <Icon t="edit" className="w-4 h-4 ml-[16px] shrink-0" />
          <span className="ml-[6px]">Edit</span>
          <span className="ml-[215px] text-[#666] whitespace-nowrap">Athlete Entries [Competitors: 12 (male: 5 / female: 7)]</span>
          <div className="ml-auto mr-[16px] flex items-center gap-[34px]">
            <svg viewBox="0 0 10 10" className="w-[10px] h-[10px]"><path d="M0 5h10" stroke="#222" /></svg>
            <svg viewBox="0 0 10 10" className="w-[10px] h-[10px]"><rect x=".5" y=".5" width="9" height="9" rx="1" stroke="#222" fill="none" /></svg>
            <svg viewBox="0 0 10 10" className="w-[10px] h-[10px]"><path d="M0 0l10 10M10 0L0 10" stroke="#222" /></svg>
          </div>
        </div>
        <div className="h-[24px] flex items-start pl-[2px] shrink-0">
          <div className="w-[265px] h-[22px] bg-white border border-[#c4c4c4]" />
          <div className="ml-[9px] w-[265px] h-[22px] bg-white border border-[#c4c4c4]" />
          <div className="ml-[9px] w-[265px] h-[22px] bg-white border border-[#c4c4c4]" />
          <div className="ml-[9px] w-[22px] h-[22px] bg-white border border-[#d0d0d0] rounded-[3px] flex items-center justify-center"><Icon t="funnel" /></div>
          <Icon t="user" className="w-[15px] h-[16px] ml-[12px] mt-[3px] shrink-0" />
          <div className="ml-[4px] mt-[4px] w-[14px] h-[14px] bg-white border border-[#b4b4b4] rounded-[2px]" />
          <span className="ml-[5px] mt-[2px] whitespace-nowrap">Photo preview</span>
        </div>
        <div className="ml-[1px] mr-[2px] h-[566px] shrink-0 border-2 border-[#8fb8e4] bg-white flex relative">
          <div className="w-[968px] shrink-0">
            <div className={`${gridCols} h-[26px] border-b border-[#e4e4e4]`}>
              {heads.map((h) => (
                <div key={h} className="flex items-center justify-center pt-[2px] border-r border-[#e8e8e8] whitespace-nowrap overflow-hidden text-[#222]">{h}</div>
              ))}
            </div>
            {people.map((p, i) => <PersonRow key={i} p={p} sel={i === 10} />)}
          </div>
          <div className="flex-1 bg-[#f1f1f1]" />
          <Icon t="cols" className="w-[12px] h-[12px] absolute left-[968px] top-[7px]" />
        </div>
        <div className="h-[15px] pl-[460px] shrink-0">
          <span className="inline-block bg-[#ffff00] leading-[16px] h-[15px] px-[1px] whitespace-nowrap">P: 12 (100%)</span>
        </div>
        <div className="flex items-start pl-[50px] pt-[4px]">
          <div className="w-[146px] h-[14px] mt-[3px] rounded-[1px] bg-[#2484e0] text-[#bcd8f4] text-[9px] leading-[14px] text-center shrink-0">100 %</div>
          <div className="ml-[50px] w-[248px] shrink-0">
            <div className="h-[25px] leading-[25px]">12 / 12 Records found (100%)</div>
            <div className="h-[26px] leading-[26px]">Entries selected: 1</div>
          </div>
          <div className="flex flex-col gap-[5px]">
            <div className="flex gap-[5px] pl-[1px]">
              <Btn ic="refresh" label="Refres..." w="w-[93px]" />
              <Btn ic="enter" label="Select ..." w="w-[93px]" />
              <Btn label="Change st..." w="w-[93px]" />
              <Btn ic="strike" label="Cross ..." w="w-[93px]" />
              <Btn ic="trash" label="Delete" w="w-[93px]" />
            </div>
            <div className="flex gap-[5px]">
              <Btn ic="accred" label="Accreditati..." w="w-[118px]" />
              <Btn ic="hash" label="Back numb..." w="w-[118px]" />
              <Btn ic="medal" label="Certificate" w="w-[118px]" />
              <Btn ic="label" label="Label" w="w-[118px]" />
            </div>
          </div>
        </div>
      </div>
    </div>
  );
}
